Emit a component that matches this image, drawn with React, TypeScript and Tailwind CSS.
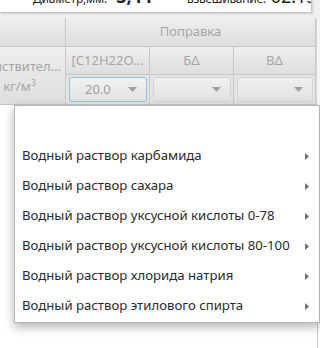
import React from "react";

const items = [
  "Водный раствор карбамида",
  "Водный раствор сахара",
  "Водный раствор уксусной кислоты 0-78",
  "Водный раствор уксусной кислоты 80-100",
  "Водный раствор хлорида натрия",
  "Водный раствор этилового спирта",
];

function Arrow() {
  return (
    <svg width="4" height="7" viewBox="0 0 4 7" className="shrink-0">
      <path d="M0 0 L4 3.5 L0 7 Z" fill="#707070" />
    </svg>
  );
}

function Down() {
  return (
    <svg width="9" height="5" viewBox="0 0 9 5" className="shrink-0">
      <path d="M0 0 L9 0 L4.5 5 Z" fill="#a0a0a0" />
    </svg>
  );
}

const hdr =
  "bg-gradient-to-b from-[#efefef] to-[#dedede] border-r border-b border-[#c8c8c8] flex items-center justify-center text-[#a6a6a6] text-[13px]";

export default function App() {
  return (
    <div
      className="w-[320px] h-[348px] relative overflow-hidden bg-white"
      style={{ fontFamily: '"Noto Sans", "Open Sans", sans-serif' }}
    >
      {/* top panel */}
      <div className="h-[18px] bg-[#f0f0f0] flex">
        <div className="w-[312px] h-[13px] bg-white border-b border-r border-[#c4c4c4] shadow-[1px_1px_2px_rgba(0,0,0,0.15)] relative overflow-hidden">
          <div className="flex items-end absolute left-[33px] bottom-[7px] leading-none text-[#222]">
            <span className="text-[12px] tracking-[-0.2px]">Диаметр,мм:</span>
            <span className="text-[18px] font-bold ml-[9px]">3,44</span>
          </div>
          <div className="flex items-end absolute left-[187px] bottom-[7px] leading-none text-[#222]">
            <span className="text-[12px] tracking-[-0.3px]">взвешивание:</span>
            <span className="text-[18px] ml-[5px]">02:13</span>
          </div>
        </div>
      </div>

      {/* table header */}
      <div className="flex bg-[#f0f0f0]">
        <div
          className="grid w-[316px] h-[87px] bg-[#e6e6e6]"
          style={{
            gridTemplateColumns: "66px 84px 84px 82px",
            gridTemplateRows: "29px 28px 30px",
          }}
        >
          <div className={hdr}></div>
          <div className={hdr + " col-span-3"}>Поправка</div>
          <div className={hdr + " row-span-2 flex-col leading-[20px]"}>
            <span className="-ml-[10px] whitespace-nowrap">йствител...</span>
            <span className="-ml-[26px]">
              кг/м<sup className="text-[9px]">3</sup>
            </span>
          </div>
          <div className={hdr + " whitespace-nowrap"}>[C12H22O...</div>
          <div className={hdr}>БΔ</div>
          <div className={hdr}>ВΔ</div>
          <div className="border-r border-b border-[#c8c8c8] bg-[#e4e4e4] p-[2px] pl-[3px]">
            <div className="h-full rounded-[3px] border border-[#89c6e2] bg-gradient-to-b from-[#f2f2f2] to-[#e2e2e2] flex items-center pl-[15px] pr-[9px] justify-between text-[13px] text-[#a0a0a0]">
              <span>20.0</span>
              <Down />
            </div>
          </div>
          <div className="border-r border-b border-[#c8c8c8] bg-[#e4e4e4] p-[2px] pl-[3px]">
            <div className="h-full rounded-[3px] border border-[#d4d4d4] bg-gradient-to-b from-[#f0f0f0] to-[#e2e2e2] flex items-center justify-end pr-[9px]">
              <Down />
            </div>
          </div>
          <div className="border-r border-b border-[#c8c8c8] bg-[#e4e4e4] p-[2px] pl-[3px]">
            <div className="h-full rounded-[3px] border border-[#d4d4d4] bg-gradient-to-b from-[#f0f0f0] to-[#e2e2e2] flex items-center justify-end pr-[9px]">
              <Down />
            </div>
          </div>
        </div>
        <div className="flex-1 bg-[#f4f4f4] border-l border-[#d8d8d8]"></div>
      </div>

      <div className="absolute left-[317px] top-[105px] bottom-0 w-px bg-[#c8c8c8]"></div>

      {/* popup menu */}
      <div className="absolute left-[14px] top-[105px] w-[306px] h-[218px] bg-white border border-[#b4b4b4] shadow-[0_4px_10px_rgba(0,0,0,0.3)] pt-[5px]">
        <div className="h-[30px]"></div>
        {items.map((t) => (
          <div
            key={t}
            className="h-[30px] flex items-center justify-between pl-[7px] pr-[10px] text-[13.2px] text-[#2a2a2a] whitespace-nowrap"
          >
            <span>{t}</span>
            <Arrow />
          </div>
        ))}
      </div>
    </div>
  );
}
